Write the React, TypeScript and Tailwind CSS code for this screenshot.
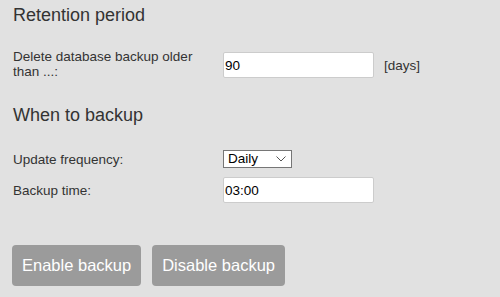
import React from "react";

export default function App() {
  return (
    <div
      className="w-[500px] h-[297px] bg-[#e1e1e1] text-[#333333] pl-[13px] pt-[5px] overflow-hidden"
      style={{ fontFamily: '"Liberation Sans", Arial, sans-serif' }}
    >
      <h2 className="text-[18px] leading-[21px] font-normal">Retention period</h2>

      <div className="mt-[23px] flex items-start">
        <label className="w-[200px] mr-[10px] text-[13.5px] leading-[15px]">
          Delete database backup older than ...:
        </label>
        <div className="mt-[3px] flex items-center">
          <input
            defaultValue="90"
            className="block w-[151px] h-[26px] bg-white border border-[#cccccc] rounded-[2px] px-[1px] text-[13.5px] text-black outline-none"
            style={{ fontFamily: '"Liberation Sans", Arial, sans-serif' }}
          />
          <span className="ml-[10px] text-[13.5px] leading-[15px]">[days]</span>
        </div>
      </div>

      <h2 className="mt-[26px] text-[18px] leading-[21px] font-normal">When to backup</h2>

      <div className="mt-[24px] flex items-center">
        <label className="w-[200px] mr-[10px] text-[13.5px] leading-[15px]">Update frequency:</label>
        <div className="relative w-[69px] h-[18px]">
          <select
            defaultValue="Daily"
            className="block appearance-none w-[69px] h-[18px] py-0 bg-white border border-[#767676] pl-[4px] text-[13.5px] leading-[16px] text-black outline-none"
            style={{ fontFamily: '"Liberation Sans", Arial, sans-serif' }}
          >
            <option>Daily</option>
            <option>Weekly</option>
            <option>Monthly</option>
          </select>
          <svg
            className="absolute right-[6px] top-[6px] pointer-events-none"
            width="10"
            height="6"
            viewBox="0 0 10 6"
            fill="none"
          >
            <path d="M0.5 0.5 L5 5 L9.5 0.5" stroke="#555" strokeWidth="1" />
          </svg>
        </div>
      </div>

      <div className="mt-[9px] flex items-center">
        <label className="w-[200px] mr-[10px] text-[13.5px] leading-[15px]">Backup time:</label>
        <input
          defaultValue="03:00"
          className="block w-[151px] h-[26px] bg-white border border-[#cccccc] rounded-[2px] px-[1px] text-[13.5px] text-black outline-none"
          style={{ fontFamily: '"Liberation Sans", Arial, sans-serif' }}
        />
      </div>

      <div className="mt-[42px] flex gap-[11px] -ml-[1px]">
        <button className="h-[41px] px-[10px] rounded-[4px] bg-[#9b9b9b] text-white text-[16.5px]">
          Enable backup
        </button>
        <button className="h-[41px] px-[10px] rounded-[4px] bg-[#9b9b9b] text-white text-[16.5px]">
          Disable backup
        </button>
      </div>
    </div>
  );
}
